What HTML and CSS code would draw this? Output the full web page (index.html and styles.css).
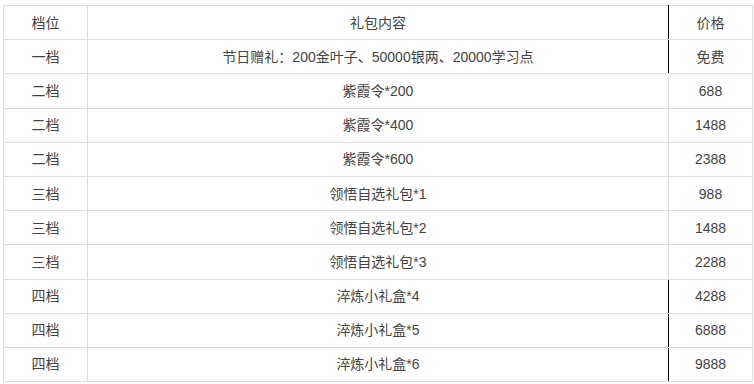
FILE: index.html
```html
<!DOCTYPE html>
<html lang="zh">
<head>
<meta charset="utf-8">
<link rel="stylesheet" href="styles.css">
</head>
<body>
<div class="wrap">
<table class="gifts">
  <colgroup><col class="c1"><col class="c2"><col class="c3"></colgroup>
  <tr><td>档位</td><td class="mark">礼包内容</td><td>价格</td></tr>
  <tr><td>一档</td><td class="mark">节日赠礼：200金叶子、50000银两、20000学习点</td><td>免费</td></tr>
  <tr><td>二档</td><td>紫霞令*200</td><td>688</td></tr>
  <tr><td>二档</td><td>紫霞令*400</td><td>1488</td></tr>
  <tr><td>二档</td><td>紫霞令*600</td><td>2388</td></tr>
  <tr><td>三档</td><td>领悟自选礼包*1</td><td>988</td></tr>
  <tr><td>三档</td><td>领悟自选礼包*2</td><td>1488</td></tr>
  <tr><td>三档</td><td>领悟自选礼包*3</td><td>2288</td></tr>
  <tr><td>四档</td><td class="mark">淬炼小礼盒*4</td><td>4288</td></tr>
  <tr><td>四档</td><td class="mark">淬炼小礼盒*5</td><td>6888</td></tr>
  <tr><td>四档</td><td class="mark">淬炼小礼盒*6</td><td>9888</td></tr>
</table>
</div>
</body>
</html>
```
FILE: styles.css
```css
html, body {
  margin: 0;
  padding: 0;
  background: #fff;
}
.wrap {
  padding: 5px 2px 0 3px;
}
.gifts {
  width: 749px;
  border-collapse: collapse;
  table-layout: fixed;
  font-family: "Liberation Sans", "Noto Sans CJK SC", sans-serif;
  font-size: 14px;
  color: #444;
}
.c1 { width: 84px; }
.c2 { width: 581px; }
.c3 { width: 84px; }
.gifts tr { height: 34.2px; }
.gifts td {
  border: 1px solid #dedede;
  text-align: center;
  vertical-align: middle;
  padding: 0 4px;
  line-height: 20px;
}
.gifts td.mark {
  border-right: 1px solid #000;
}
```
